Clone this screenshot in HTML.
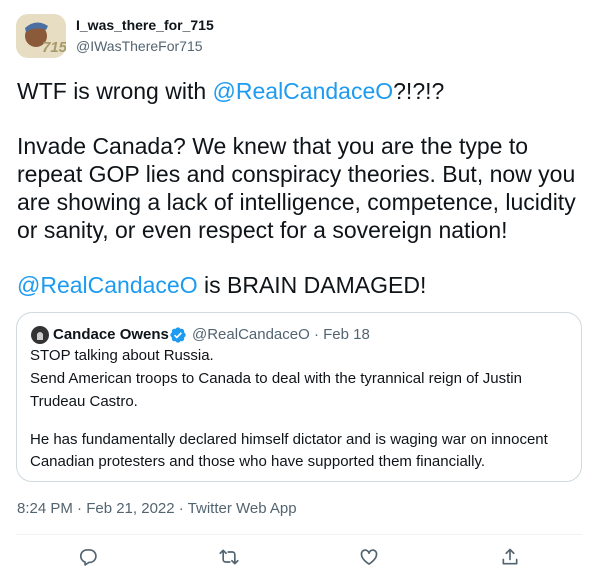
<!DOCTYPE html>
<html><head><meta charset="utf-8"><style>
*{margin:0;padding:0;box-sizing:border-box}
body{width:598px;height:582px;background:#fff;font-family:"Liberation Sans",Arial,sans-serif;color:#0f1419;position:relative;overflow:hidden}
.a{position:absolute;white-space:nowrap}
.big{font-size:23px;line-height:28px}
.q{font-size:15px;line-height:20px}
.blue{color:#1d9bf0}
.gray{color:#536471}
</style></head><body>
<svg class="a" style="left:16px;top:14px" width="50" height="44" viewBox="0 0 50 44">
<rect x="0" y="0" width="50" height="44" rx="12" fill="#e6ddc2"/>
<circle cx="20" cy="22" r="11" fill="#8a5a3a"/>
<path d="M9 14 Q20 4 32 12 L30 16 Q20 12 10 18Z" fill="#4a6fa0"/>
<text x="26" y="38" font-family="Liberation Sans" font-weight="bold" font-style="italic" font-size="15" fill="#a89a6a">715</text>
</svg>
<div class="a" style="left:76px;top:16px;font-size:14px;font-weight:bold;line-height:18px">I_was_there_for_715</div>
<div class="a gray" style="left:76px;top:37px;font-size:14px;line-height:18px">@IWasThereFor715</div>

<div class="a big" style="left:17px;top:77px">WTF is wrong with <span class="blue">@RealCandaceO</span>?!?!?</div>
<div class="a big" style="left:17px;top:132px">Invade Canada? We knew that you are the type to</div>
<div class="a big" style="left:17px;top:160px">repeat GOP lies and conspiracy theories. But, now you</div>
<div class="a big" style="left:17px;top:188px">are showing a lack of intelligence, competence, lucidity</div>
<div class="a big" style="left:17px;top:216px">or sanity, or even respect for a sovereign nation!</div>
<div class="a big" style="left:17px;top:271px"><span class="blue">@RealCandaceO</span> is BRAIN DAMAGED!</div>

<div class="a" style="left:16px;top:312px;width:566px;height:170px;border:1px solid #cfd9de;border-radius:16px"></div>
<svg class="a" style="left:31px;top:326px" width="18" height="18" viewBox="0 0 18 18"><circle cx="9" cy="9" r="9" fill="#333"/><path d="M6 14 L6 8 Q9 4 12 8 L12 14Z" fill="#ccc"/></svg>
<div class="a q" style="left:53px;top:325px;font-weight:bold">Candace Owens</div>
<svg class="a" style="left:169px;top:326px" width="18" height="18" viewBox="0 0 24 24"><path fill="#1d9bf0" d="M22.25 12c0-1.43-.88-2.670-2.19-3.340.46-1.390.2-2.900-.81-3.910s-2.520-1.270-3.910-.81c-.66-1.310-1.910-2.190-3.340-2.190s-2.670.88-3.330 2.190c-1.400-.46-2.910-.2-3.920.81s-1.260 2.520-.8 3.910c-1.310.67-2.200 1.910-2.200 3.340s.89 2.670 2.200 3.340c-.46 1.390-.21 2.900.8 3.910s2.520 1.260 3.910.81c.67 1.310 1.910 2.190 3.340 2.190s2.680-.88 3.340-2.190c1.390.45 2.900.2 3.910-.81s1.270-2.520.81-3.910c1.310-.67 2.190-1.910 2.190-3.340z"/><path d="M7.5 12.2l3 3 6-6.2" stroke="#fff" stroke-width="2.2" fill="none"/></svg>
<div class="a q gray" style="left:192px;top:325px">@RealCandaceO · Feb 18</div>
<div class="a q" style="left:30px;top:346px">STOP talking about Russia.</div>
<div class="a q" style="left:30px;top:369px">Send American troops to Canada to deal with the tyrannical reign of Justin</div>
<div class="a q" style="left:30px;top:392px">Trudeau Castro.</div>
<div class="a q" style="left:30px;top:430px">He has fundamentally declared himself dictator and is waging war on innocent</div>
<div class="a q" style="left:30px;top:452px">Canadian protesters and those who have supported them financially.</div>

<div class="a gray" style="left:17px;top:499px;font-size:15px;line-height:20px">8:24 PM · Feb 21, 2022 · Twitter Web App</div>
<div class="a" style="left:16px;top:534px;width:566px;height:1px;background:#eff3f4"></div>

<svg class="a" style="left:78px;top:547px" width="20" height="20" viewBox="0 0 24 24" fill="none" stroke="#536471" stroke-width="2"><path d="M10 3.5h4a7.5 7.5 0 0 1 0 15h-1l-4.5 3v-3.4A7.5 7.5 0 0 1 10 3.5z" stroke-linejoin="round"/></svg>
<svg class="a" style="left:219px;top:547px" width="20" height="20" viewBox="0 0 24 24" fill="none" stroke="#536471" stroke-width="2" stroke-linecap="round" stroke-linejoin="round"><path d="M5 4v11a3 3 0 0 0 3 3h5M1.5 7.5 5 4l3.5 3.5"/><path d="M11 6h5a3 3 0 0 1 3 3v11M15.5 16.5 19 20l3.5-3.5"/></svg>
<svg class="a" style="left:359px;top:547px" width="20" height="20" viewBox="0 0 24 24" fill="none" stroke="#536471" stroke-width="2"><path d="M12 20.5S3 15 3 9a4.5 4.5 0 0 1 9-1.5A4.5 4.5 0 0 1 21 9c0 6-9 11.5-9 11.5z" stroke-linejoin="round"/></svg>
<svg class="a" style="left:500px;top:547px" width="20" height="20" viewBox="0 0 24 24" fill="none" stroke="#536471" stroke-width="2" stroke-linecap="round" stroke-linejoin="round"><path d="M12 3v12M7.5 7.5 12 3l4.5 4.5M4 15v5h16v-5"/></svg>
</body></html>
